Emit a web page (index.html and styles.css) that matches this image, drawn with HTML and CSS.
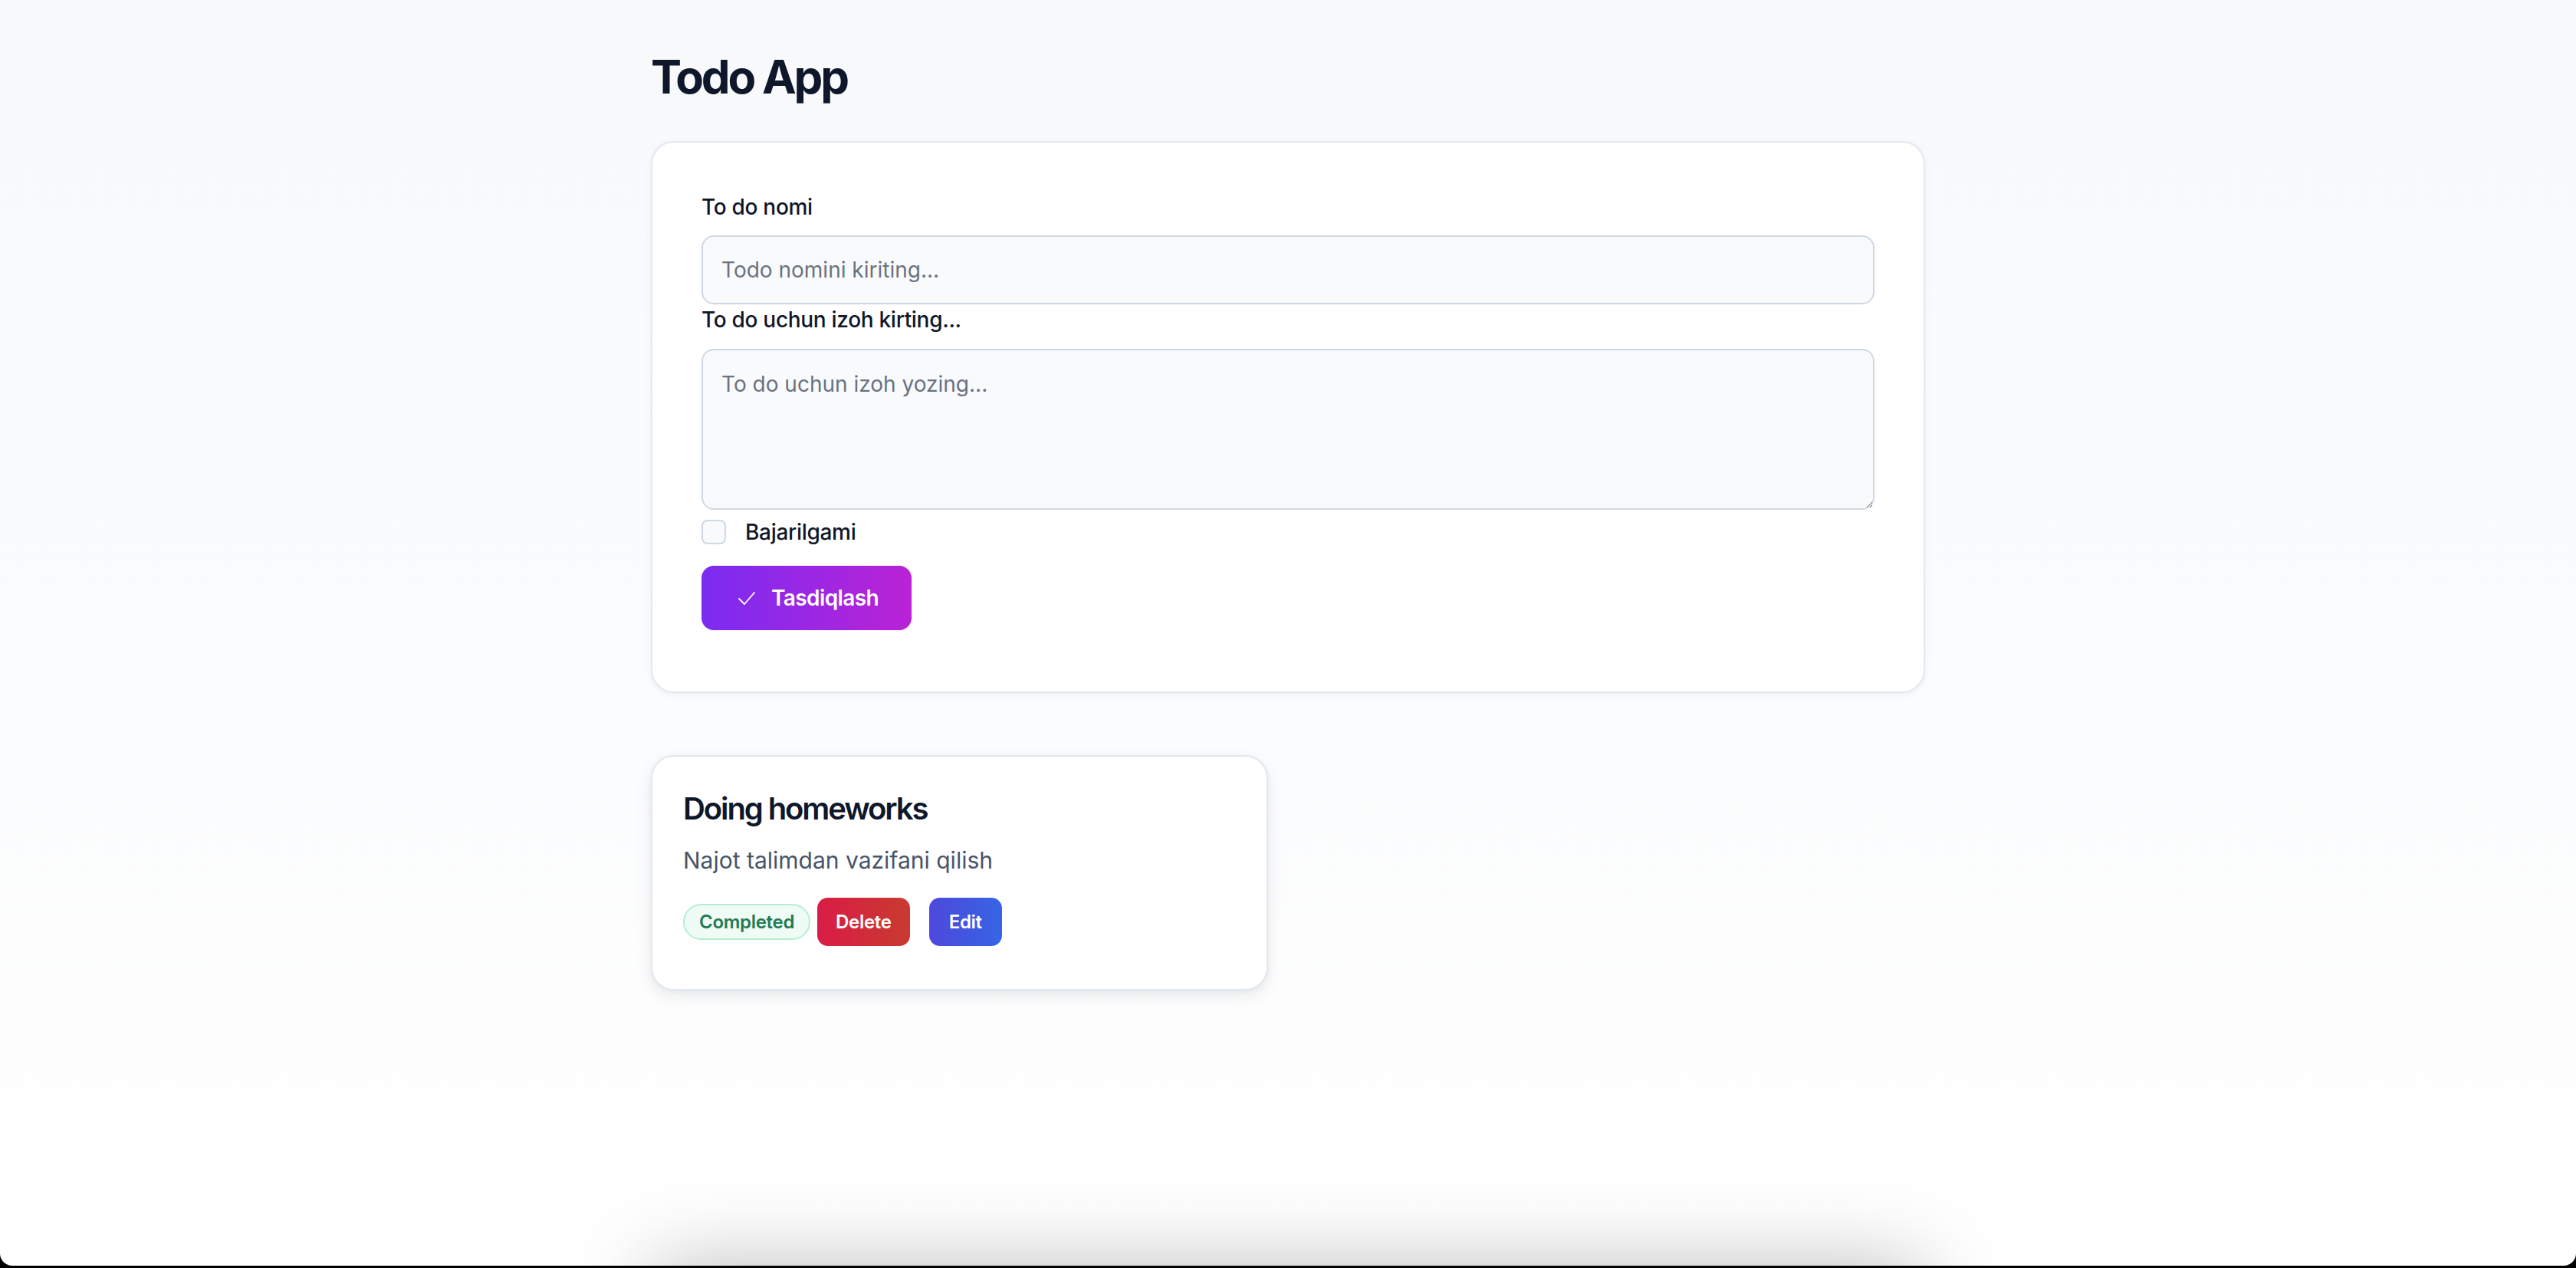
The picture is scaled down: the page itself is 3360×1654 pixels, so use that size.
FILE: index.html
```html
<!DOCTYPE html>
<html lang="uz">
<head>
<meta charset="utf-8">
<title>Todo App</title>
<link rel="stylesheet" href="styles.css">
</head>
<body>
<main class="page">
  <h1 class="page-title">Todo App</h1>

  <form class="form-card">
    <label class="field-label" for="todo-name">To do nomi</label>
    <input id="todo-name" class="text-input" type="text" placeholder="Todo nomini kiriting...">

    <label class="field-label" for="todo-desc">To do uchun izoh kirting...</label>
    <textarea id="todo-desc" class="text-area" placeholder="To do uchun izoh yozing..."></textarea>

    <label class="check-row">
      <span class="check-box"></span>
      <span class="check-text">Bajarilgami</span>
    </label>

    <button type="button" class="submit-btn">
      <svg class="submit-icon" width="22" height="17" viewBox="0 0 22 17" fill="none" stroke="#ffffff" stroke-width="1.8" stroke-linecap="round" stroke-linejoin="round"><path d="M1 9 L8 16 L21 1"/></svg>
      <span>Tasdiqlash</span>
    </button>
  </form>

  <section class="todo-grid">
    <article class="todo-card">
      <h2 class="todo-title">Doing homeworks</h2>
      <p class="todo-desc">Najot talimdan vazifani qilish</p>
      <div class="todo-actions">
        <span class="badge-done">Completed</span>
        <button type="button" class="btn-delete">Delete</button>
        <button type="button" class="btn-edit">Edit</button>
      </div>
    </article>
  </section>
</main>
<div class="below-fold-shadow"></div>
<div class="window-frame"></div>
</body>
</html>
```

FILE: styles.css
```css
* { box-sizing: border-box; }

html, body {
  margin: 0;
  padding: 0;
}

body {
  min-height: 100vh;
  background: linear-gradient(to bottom, #f7f9fb 0%, #fbfcfd 60%, #ffffff 100%);
  font-family: Inter, "Noto Sans", sans-serif;
  color: #0f172a;
  overflow: hidden;
}

.page {
  width: 1662px;
  margin: 0 auto;
  padding-top: 64px;
}

.page-title {
  margin: 0 0 48px 0;
  font-size: 60px;
  line-height: 72px;
  font-weight: 700;
  letter-spacing: -3.2px;
  color: #0f172a;
}

.form-card {
  display: flex;
  flex-direction: column;
  align-items: flex-start;
  background: #ffffff;
  border: 2px solid #e3e7ef;
  border-radius: 30px;
  padding: 64px 64px 80px 64px;
  box-shadow: 0 2px 10px rgba(15, 23, 42, 0.05);
}

.field-label {
  display: block;
  font-size: 28px;
  line-height: 40px;
  font-weight: 500;
  letter-spacing: -0.3px;
  color: #0f172a;
  margin-bottom: 17px;
}

.text-input {
  display: block;
  width: 100%;
  height: 90px;
  padding: 0 24px;
  background: #f8fafc;
  border: 2px solid #cfd8e3;
  border-radius: 16px;
  font-family: Inter, "Noto Sans", sans-serif;
  font-size: 28px;
  color: #0f172a;
  outline: none;
}

.text-input + .field-label {
  margin-bottom: 18px;
}

.text-area {
  display: block;
  width: 100%;
  height: 210px;
  padding: 24px;
  background: #f8fafc;
  border: 2px solid #cfd8e3;
  border-radius: 16px;
  font-family: Inter, "Noto Sans", sans-serif;
  font-size: 28px;
  line-height: 40px;
  color: #0f172a;
  resize: vertical;
  outline: none;
}

.text-input::placeholder,
.text-area::placeholder {
  color: #6b7280;
  opacity: 1;
}

.check-row {
  display: flex;
  align-items: center;
  gap: 25px;
  margin-top: 9px;
  height: 40px;
}

.check-box {
  width: 32px;
  height: 32px;
  border: 2px solid #cfd8e3;
  border-radius: 8px;
  background: #f8fafc;
}

.check-text {
  font-size: 28px;
  line-height: 40px;
  font-weight: 500;
  letter-spacing: -0.3px;
  color: #0f172a;
}

.submit-btn {
  margin-top: 24px;
  display: flex;
  align-items: center;
  gap: 21px;
  height: 84px;
  padding: 0 43px 0 48px;
  border: none;
  border-radius: 16px;
  background: linear-gradient(to right, #7a2cf1, #bb22d6);
  color: #ffffff;
  font-family: Inter, "Noto Sans", sans-serif;
  font-size: 28px;
  font-weight: 600;
  letter-spacing: -0.6px;
}

.submit-icon {
  display: block;
  flex: none;
}

.todo-grid {
  margin-top: 81px;
  display: grid;
  grid-template-columns: repeat(2, 1fr);
  gap: 52px;
}

.todo-card {
  background: #ffffff;
  border: 2px solid #e3e7ef;
  border-radius: 30px;
  padding: 40px 40px 56px 40px;
  box-shadow: 0 8px 22px rgba(15, 23, 42, 0.08), 0 2px 6px rgba(15, 23, 42, 0.04);
}

.todo-title {
  margin: 0;
  font-size: 40px;
  line-height: 56px;
  font-weight: 600;
  letter-spacing: -2.1px;
  color: #0f172a;
}

.todo-desc {
  margin: 17px 0 0 0;
  font-size: 30px;
  line-height: 44px;
  color: #475569;
}

.todo-actions {
  margin-top: 27px;
  display: flex;
  align-items: center;
  height: 63px;
}

.badge-done {
  display: inline-flex;
  align-items: center;
  height: 47px;
  padding: 0 19px;
  border: 2px solid #b4efd3;
  border-radius: 999px;
  background: #effcf5;
  color: #227a52;
  font-size: 24px;
  font-weight: 600;
  letter-spacing: -0.3px;
}

.btn-delete,
.btn-edit {
  height: 63px;
  padding: 0 24px;
  border: none;
  border-radius: 14px;
  color: #ffffff;
  font-family: Inter, "Noto Sans", sans-serif;
  font-size: 24px;
  font-weight: 600;
  letter-spacing: -0.3px;
}

.btn-delete {
  margin-left: 9px;
  background: linear-gradient(to right, #d91c45, #c93a30);
}

.btn-edit {
  margin-left: 25px;
  padding: 0 26px;
  background: linear-gradient(to right, #4e48dc, #3665e4);
}

.below-fold-shadow {
  position: fixed;
  top: 100vh;
  left: 0;
  right: 0;
  margin: 0 auto;
  width: 1662px;
  height: 200px;
  border-radius: 30px;
  background: #ffffff;
  box-shadow: 0 0 110px rgba(0, 0, 0, 0.28);
  pointer-events: none;
}

.window-frame {
  position: fixed;
  top: 0;
  left: 0;
  right: 0;
  bottom: 3px;
  border-radius: 0 0 16px 16px;
  box-shadow: 0 0 0 40px #000000;
  pointer-events: none;
}
```
